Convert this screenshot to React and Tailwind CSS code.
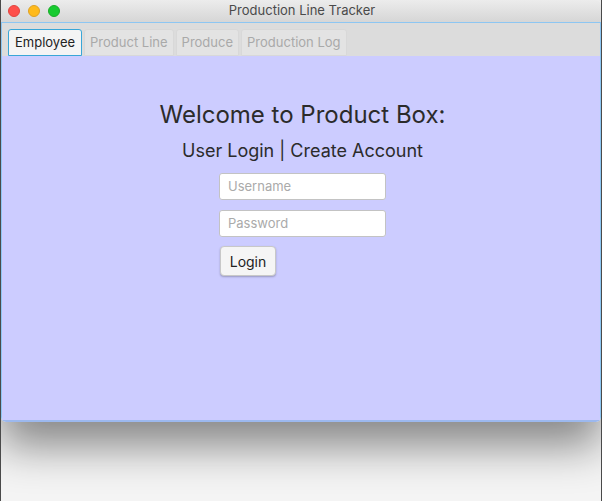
export default function App() {
  const font = { fontFamily: 'Inter, "Noto Sans", sans-serif' };
  return (
    <div className="w-[602px] h-[501px] bg-[#f4f4f4] overflow-hidden border-x border-[#4a4a4a]" style={font}>
      <div className="w-full h-[422px] flex flex-col rounded-[5px] overflow-hidden shadow-[0_24px_44px_rgba(0,0,0,0.45)]">
        <div className="h-[22px] shrink-0 bg-gradient-to-b from-[#ececec] to-[#d6d6d6] flex items-center relative">
          <div className="flex gap-[8px] pl-[7px]">
            <div className="w-[12px] h-[12px] rounded-full bg-[#fe4f4a] border border-[#e0443e]" />
            <div className="w-[12px] h-[12px] rounded-full bg-[#ffba1b] border border-[#dea123]" />
            <div className="w-[12px] h-[12px] rounded-full bg-[#17cb30] border border-[#1aab29]" />
          </div>
          <div className="absolute inset-0 flex items-center justify-center text-[13px] text-[#4a4a4a] pl-[2px]">
            Production Line Tracker
          </div>
        </div>
        <div className="flex-1 flex flex-col border border-[#8dc6f2] border-b-[2px] border-b-[#9cb8ee]">
          <div className="h-[33px] shrink-0 bg-[#dcdcdc] flex items-end pl-[6px] gap-[2px]">
            <div className="h-[27px] px-[6px] flex items-center bg-[#f4f4f4] border border-[#39a6d7] rounded-t-[3px] text-[13px] text-[#222]">
              Employee
            </div>
            <div className="h-[27px] px-[5px] flex items-center bg-[#e3e3e3] border border-[#d8d8d8] rounded-t-[3px] text-[13px] text-[#a9a9a9]">
              Product Line
            </div>
            <div className="h-[27px] px-[5px] flex items-center bg-[#e3e3e3] border border-[#d8d8d8] rounded-t-[3px] text-[13px] text-[#a9a9a9]">
              Produce
            </div>
            <div className="h-[27px] px-[5px] flex items-center bg-[#e3e3e3] border border-[#d8d8d8] rounded-t-[3px] text-[13px] text-[#a9a9a9]">
              Production Log
            </div>
          </div>
          <div className="flex-1 bg-[#ccccff] flex flex-col items-center pt-[44px]">
            <div className="text-[24px] leading-[30px] text-[#2b2b2b] pl-[3px]">Welcome to Product Box:</div>
            <div className="text-[18px] leading-[22px] text-[#2b2b2b] mt-[10px] pl-[3px]">User Login | Create Account</div>
            <div className="flex flex-col items-start mt-[11px] pl-[3px]">
              <div className="w-[167px] h-[27px] bg-white border border-[#c3c3c3] rounded-[3px] flex items-center pl-[8px] text-[13px] text-[#aaaaaa]">
                Username
              </div>
              <div className="w-[167px] h-[27px] bg-white border border-[#c3c3c3] rounded-[3px] flex items-center pl-[8px] text-[13px] text-[#aaaaaa] mt-[10px]">
                Password
              </div>
              <div className="ml-[1px] mt-[9px] w-[56px] h-[30px] bg-[#f5f5f5] border border-[#c8c8c8] rounded-[4px] shadow-[0_1px_2px_rgba(0,0,0,0.25)] flex items-center justify-center text-[14px] text-[#222]">
                Login
              </div>
            </div>
          </div>
        </div>
      </div>
    </div>
  );
}
